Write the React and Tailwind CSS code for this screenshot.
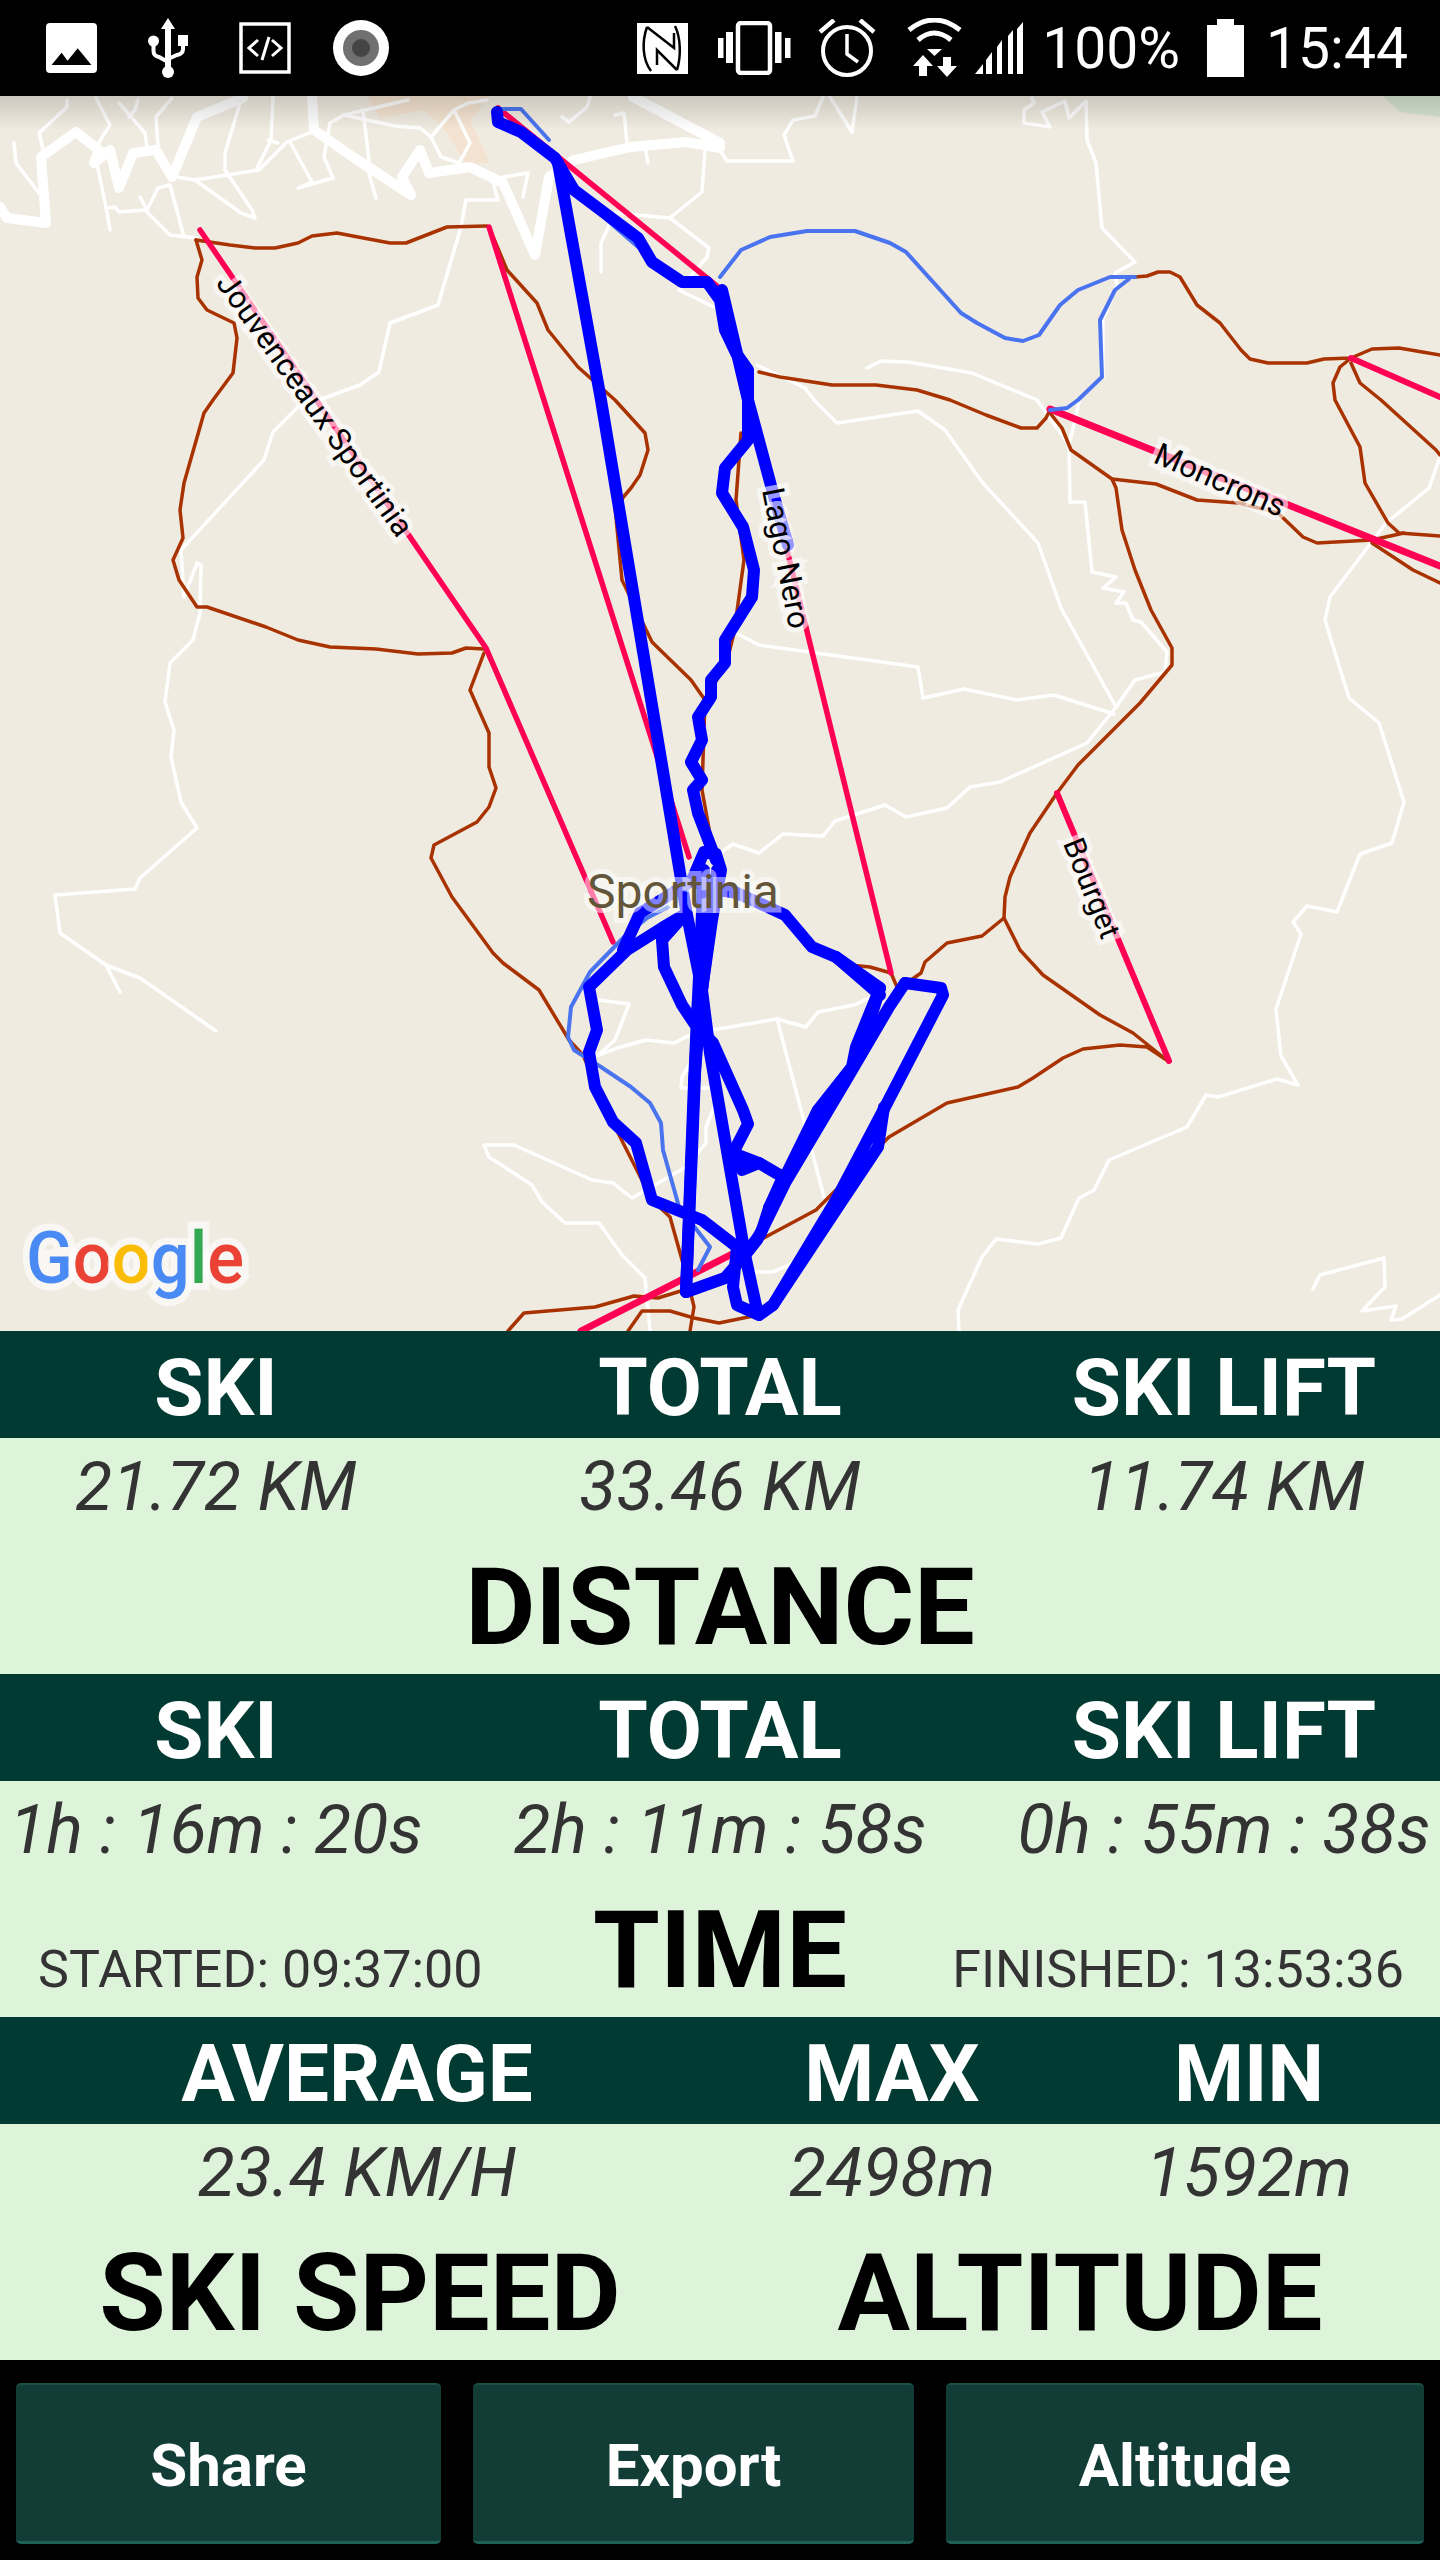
import React from "react";

const thickRoads = [
  "0,207 7,218 46,223 41,157 76,132 99,150 94,163 110,150 119,188 133,153 156,150 172,177 197,117 243,98",
  "312,97 314,130 353,157 411,195 402,177 420,150 429,173 470,167 503,183 535,255 549,177 574,160 631,147 686,142 720,148",
  "633,97 720,143",
];

const roads = [
  "67,100 67,107 39,133 44,153",
  "14,143 16,163 39,193",
  "96,98 110,125 94,150 106,207 110,230",
  "119,103 145,133 147,147",
  "138,100 135,110 129,117",
  "172,98 156,117 158,147",
  "106,208 115,207 119,212 145,210 170,235 197,238",
  "140,197 147,210 158,188 170,185 184,237",
  "177,177 195,180 227,175 259,170 287,142 312,132",
  "195,180 241,213 255,218 252,210 225,170 225,153 241,100",
  "273,97 271,140 257,168",
  "268,140 278,143",
  "290,142 312,182 298,188 333,178 324,157 330,123 344,115 395,103 408,100",
  "344,115 395,126 420,128 431,137 454,110 468,103 487,100",
  "363,110 369,160 367,167 376,198",
  "431,137 441,157 459,163 470,143 454,110",
  "503,177 528,173 523,197",
  "493,182 498,200 466,200 461,227 438,305 390,323 379,372 360,385 319,400 298,407 273,432 264,460 181,550 184,597 197,563 201,565 200,613 193,640 170,663 165,702 174,730 171,757 181,802 197,828 140,878 135,889 55,895 60,933 106,965 140,978 216,1031",
  "106,965 120,992",
  "562,117 569,122 587,107 590,97",
  "615,115 624,113 627,143",
  "645,147 648,163",
  "705,150 702,192 670,218 709,248 707,257 679,290 720,310",
  "601,272 601,243 615,213 670,218",
  "720,150 727,161 793,161 784,135 793,120 815,116 823,97",
  "830,97 852,132 857,97",
  "1032,98 1034,103 1024,110 1024,123 1050,127 1042,112 1065,101 1069,118 1086,101 1087,140 1096,163 1102,228 1135,262 1115,273 1117,285 1103,320 1103,377 1080,398 1069,445 1070,502 1085,502 1092,572 1116,577 1103,588 1124,592 1116,603 1126,603 1133,620 1141,622 1167,652 1165,672 1135,680 1116,707 1087,743 1000,782 970,787 947,808 906,817 885,805 835,821 823,836 783,834 759,853 733,844 720,853",
  "1037,400 1069,445",
  "814,400 837,423 918,411 945,430 982,482 1038,543 1061,608 1116,707",
  "867,368 881,361 908,362 972,373 1037,400",
  "757,365 805,388 814,400",
  "734,632 759,645 918,667 923,698 964,689 1017,700 1054,695 1114,714",
  "1440,457 1429,488 1386,523 1330,597 1325,620 1349,698 1379,723 1404,802 1392,843 1360,854 1337,912 1307,906 1293,922 1301,934 1276,1009 1281,1056 1298,1085 1277,1079 1218,1097 1206,1095 1187,1127 1109,1160 1094,1190 1079,1198 1061,1238 1038,1244 996,1239 982,1257 958,1310 959,1331",
  "1313,1289 1320,1275 1384,1258 1385,1287 1362,1311 1396,1306 1391,1320 1402,1319 1440,1295",
  "599,1000 629,1004 615,1040 597,1056 617,1048 646,1040 674,1043 694,1033 777,1019 806,1027 818,1012 854,1005 876,995",
  "777,1019 824,1197",
  "694,1057 682,1077 681,1088 714,1088",
  "717,1100 706,1127 706,1143 686,1167 632,1198 613,1183 592,1180 514,1145 484,1145 489,1157 532,1185 542,1202 565,1223 599,1223 622,1255 645,1278 650,1331",
  "692,1297 694,1310 690,1331",
  "753,1272 773,1272 793,1263",
];

const pistes = [
  "196,240 230,245 255,248 275,248 298,243 312,236 337,233 358,237 390,243 406,243 447,227 487,226",
  "196,240 202,260 197,277 198,298 207,310 234,323 237,338 233,373 213,400 204,413 184,483 180,510 183,538 173,560 179,580 197,607 207,607 266,627 298,640 330,647 376,649 418,654 452,653 466,648 484,649",
  "484,653 470,690 489,733 489,767 496,788 489,807 477,822 434,845 431,858 452,897 493,953 503,963 539,990 569,1040 583,1055 610,1117 652,1200 670,1217 684,1267 684,1290",
  "489,227 507,270 537,303 548,330 578,367 615,400 645,433 648,450 640,475 631,488 615,507 622,580 652,642 691,680 705,700 702,790 712,845",
  "741,433 736,500 744,560 734,633 729,653 712,690",
  "759,372 780,377 832,385 876,385 917,390 950,400 986,415 1021,428 1037,428 1046,418 1050,410",
  "1135,277 1147,276 1158,272 1170,272 1180,277 1197,305 1220,323 1241,350 1250,359 1268,363 1307,363 1324,359 1351,358 1372,349 1399,348 1440,355",
  "1351,358 1340,367 1333,383 1335,400 1360,447 1365,483 1388,523 1399,533 1440,536",
  "1351,363 1360,383 1381,400 1436,450 1440,455",
  "1050,413 1062,428 1071,450 1112,479 1156,484 1197,500 1239,503 1278,513 1303,537 1317,543 1372,540 1404,533",
  "1372,543 1413,570 1440,583",
  "1112,479 1116,488 1122,530 1135,570 1151,610 1172,648 1172,665 1140,703 1078,765 1057,793 1030,833 1010,877 1005,897 1004,918 982,936 947,943 925,962 921,973 911,980",
  "1004,918 1020,950 1043,975 1100,1015 1133,1033 1168,1061 1147,1047 1120,1045 1083,1049 1063,1058 1033,1078 1018,1087 947,1103 889,1137 856,1170 816,1210 773,1233 706,1269",
  "850,965 870,967 891,973 897,987",
  "508,1331 524,1313 595,1307 634,1296 658,1298 684,1290",
  "628,1331 642,1311 670,1311 694,1318 719,1323 753,1316",
  "690,1331 694,1307 690,1290",
];

const lifts = [
  ["200,230 486,648 613,942", 5.5],
  ["489,227 689,857", 5.5],
  ["498,108 718,287 773,493 891,973", 5.5],
  ["1050,409 1440,566", 7],
  ["1057,793 1169,1061", 6],
  ["1351,358 1440,397", 6],
  ["581,1331 740,1250", 7],
];

const thinTracks = [
  "720,277 741,250 770,237 807,231 855,231 890,243 906,252 961,313 977,323 1005,338 1023,341 1039,335 1060,305 1078,290 1110,277 1135,277",
  "1129,279 1115,290 1100,320 1102,377 1078,400 1067,408 1050,410",
  "500,109 521,109 549,140",
  "592,207 638,247",
  "668,907 647,918 624,937 590,972 571,1007 568,1037 574,1050 601,1067 631,1087 650,1103 661,1123 663,1150 679,1207 710,1247 698,1270",
];

const tracks = [
  "497,112 498,122 521,132 555,158 574,190 638,238 652,262 682,282 707,282 720,300 725,330 736,353 748,370 748,440 725,468 722,493 743,527 754,570 752,597 725,640 725,663 711,680 711,697 698,717 702,740 691,762 702,780 693,790 698,813 716,860",
  "722,290 748,400 773,493 788,545",
  "558,163 601,400 679,867 686,910 702,990 710,1053 745,1255 757,1310",
  "704,870 694,1083 686,1292",
  "717,870 702,990 694,1083",
  "698,1000 692,1150 686,1292",
  "692,880 704,852 716,854 721,870 712,920 702,990",
  "684,915 662,928 627,950 589,987 597,1030 589,1052 595,1087 613,1122 636,1143 652,1200 702,1220 737,1247 745,1255",
  "640,913 623,950",
  "640,913 666,897 688,883",
  "662,940 664,967 682,1005 694,1023 713,1043 743,1110 748,1124 733,1153 742,1170 759,1163 783,1177 769,1208 761,1233 745,1255 725,1278 686,1292",
  "662,940 686,913",
  "733,1153 759,1163",
  "702,887 737,893 785,915 812,947 836,957 880,988 864,1040",
  "880,988 856,1047 852,1067 818,1110 785,1177 769,1208",
  "905,983 941,988 943,995 885,1107 836,1200 773,1305 759,1315 737,1305 733,1287 737,1247",
  "905,983 889,1007 848,1077 785,1183 757,1240 745,1255",
  "884,1107 878,1147 836,1210 773,1305",
  "836,957 880,995",
  "818,1110 800,1150 769,1208",
];

const liftLabels = [
  ["Jouvenceaux Sportinia", 315, 405, 54.5, 31],
  ["Lago Nero", 786, 558, 79, 31],
  ["Moncrons", 1220, 480, 23.5, 31],
  ["Bourget", 1092, 888, 68, 30],
];

const Lines = ({ list, color, width }) =>
  list.map((points, i) => (
    <polyline key={i} points={points} fill="none" stroke={color} strokeWidth={width} strokeLinejoin="round" strokeLinecap="round" />
  ));

const SkiMap = () => (
  <svg className="block w-full h-[1235px]" viewBox="0 96 1440 1235">
    <defs>
      <linearGradient id="shade" x1="0" y1="0" x2="0" y2="1">
        <stop offset="0" stopColor="#000" stopOpacity="0.15" />
        <stop offset="1" stopColor="#000" stopOpacity="0" />
      </linearGradient>
    </defs>
    <rect x="0" y="96" width="1440" height="1235" fill="#f0ebe0" />
    <polygon points="1383,96 1440,96 1440,117 1400,112" fill="#d7e4d2" />
    <polygon points="367,96 490,96 470,120 490,163 465,163 445,130 425,110 380,118" fill="#f4e3d0" />
    <Lines list={roads} color="#ffffff" width={3.5} />
    <Lines list={thickRoads} color="#ffffff" width={10} />
    <Lines list={pistes} color="#a93300" width={3.5} />
    {lifts.map(([points, width], i) => (
      <polyline key={i} points={points} fill="none" stroke="#ff0055" strokeWidth={width} strokeLinecap="round" strokeLinejoin="round" />
    ))}
    <Lines list={thinTracks} color="#4a73f0" width={4} />
    <Lines list={tracks} color="#0000ff" width={12} />
    {liftLabels.map(([label, x, y, angle, size]) => (
      <text
        key={label}
        transform={`translate(${x} ${y}) rotate(${angle})`}
        textAnchor="middle"
        dominantBaseline="central"
        fontFamily="Roboto, sans-serif"
        fontSize={size}
        fill="#000"
        stroke="#fff"
        strokeOpacity="0.6"
        strokeWidth="10"
        paintOrder="stroke"
      >
        {label}
      </text>
    ))}
    <text x="587" y="908" fontFamily="Roboto, sans-serif" fontSize="48" fill="#62553a" stroke="#fff" strokeOpacity="0.5" strokeWidth="10" paintOrder="stroke">
      Sportinia
    </text>
    <text x="26" y="1283" fontFamily="Roboto, sans-serif" fontWeight="500" fontSize="72" textLength="218" lengthAdjust="spacingAndGlyphs" stroke="#fff" strokeOpacity="0.6" strokeWidth="14" paintOrder="stroke">
      <tspan fill="#4a8af4">G</tspan>
      <tspan fill="#ea4335">o</tspan>
      <tspan fill="#fbbc05">o</tspan>
      <tspan fill="#4a8af4">g</tspan>
      <tspan fill="#34a853">l</tspan>
      <tspan fill="#ea4335">e</tspan>
    </text>
    <rect x="0" y="96" width="1440" height="34" fill="url(#shade)" />
  </svg>
);

const StatusBar = () => (
  <div className="h-[96px] bg-black flex justify-between items-center text-white text-[57px] leading-none">
    <div className="flex items-center pl-[46px]">
      <svg className="w-[51px] h-[51px]" viewBox="0 0 51 51">
        <rect width="51" height="50" rx="4" fill="#fff" />
        <polygon points="5.5,42 15.6,29.7 21.6,37.7 31.7,25.3 45.4,42" fill="#000" />
      </svg>
      <svg className="w-[40px] h-[60px] ml-[51px]" viewBox="0 0 40 60" fill="#fff">
        <polygon points="20,0 27,11 23,11 23,50 17,50 17,11 13,11" />
        <circle cx="20" cy="54" r="6" />
        <circle cx="5.5" cy="23" r="5.5" />
        <rect x="30" y="17" width="10" height="11" />
        <path d="M5.5 25 V33 Q5.5 38 11 39 L20 44 M35 25 V31 Q35 36 29 37 L20 41" fill="none" stroke="#fff" strokeWidth="4" />
      </svg>
      <svg className="w-[52px] h-[52px] ml-[51px]" viewBox="0 0 52 52" fill="none" stroke="#fff">
        <rect x="2" y="2" width="48" height="48" strokeWidth="3.5" />
        <path d="M19 18 L10 26 L19 34 M33 18 L42 26 L33 34 M30 15 L23 38" strokeWidth="3" />
      </svg>
      <svg className="w-[56px] h-[56px] ml-[42px]" viewBox="0 0 56 56">
        <circle cx="28" cy="28" r="28" fill="#fff" />
        <circle cx="28" cy="28" r="18" fill="#707070" />
        <circle cx="28" cy="28" r="9" fill="#444" />
      </svg>
    </div>
    <div className="flex items-center pr-[32px]">
      <svg className="w-[51px] h-[51px]" viewBox="0 0 51 51" fill="none">
        <rect width="51" height="51" fill="#fff" />
        <path d="M10 4 C5 18 5 36 14 48 M38 3 C44 15 44 34 40 47 M10 4 L37 25 V10 M40 47 L20 27 V42" stroke="#000" strokeWidth="2.5" />
      </svg>
      <svg className="w-[73px] h-[54px] ml-[30px]" viewBox="0 0 73 54" fill="#fff">
        <rect x="0" y="17" width="5.5" height="20" />
        <rect x="8" y="11" width="7" height="31" />
        <rect x="20" y="2" width="32" height="50" rx="3" fill="none" stroke="#fff" strokeWidth="4.5" />
        <rect x="57" y="11" width="6.5" height="31" />
        <rect x="67" y="17" width="5.5" height="20" />
      </svg>
      <svg className="w-[60px] h-[58px] ml-[26px]" viewBox="0 0 60 58" fill="none" stroke="#fff">
        <circle cx="30" cy="32" r="24" strokeWidth="4" />
        <path d="M3 13 L17 1 M57 13 L43 1" strokeWidth="4.5" />
        <path d="M30 15 V35 L41 43" strokeWidth="3.5" />
      </svg>
      <svg className="w-[55px] h-[60px] ml-[30px]" viewBox="0 0 55 60" fill="#fff">
        <path d="M2 12 Q27 -8 53 12 M11 22 Q27 8 44 22" fill="none" stroke="#fff" strokeWidth="5" />
        <polygon points="20,31 35,31 27.5,38" />
        <polygon points="16,37 26,48 20,48 20,58 12,58 12,48 6,48" />
        <polygon points="40,59 50,48 44,48 44,39 36,39 36,48 30,48" />
      </svg>
      <svg className="w-[48px] h-[52px] ml-[13px]" viewBox="0 0 48 52" fill="#fff">
        <polygon points="0,52 8,42 8,52" />
        <polygon points="11,38 17,30 17,52 11,52" />
        <polygon points="22,25 27,18 27,52 22,52" />
        <polygon points="33,14 38,8 38,52 33,52" />
        <polygon points="42,7 48,0 48,52 42,52" />
      </svg>
      <span className="ml-[19px]">100%</span>
      <svg className="w-[37px] h-[58px] ml-[27px]" viewBox="0 0 37 58" fill="#fff">
        <polygon points="10,0 27,0 27,6 37,6 37,58 0,58 0,6 10,6" />
      </svg>
      <span className="ml-[22px]">15:44</span>
    </div>
  </div>
);

const headCell = "text-center text-white font-bold text-[80px]";
const valueCell = "text-center italic text-[#333333] text-[68px] whitespace-nowrap";
const bigText = "text-center font-bold text-black text-[108px] leading-[140px]";

const HeadRow = ({ labels, cols }) => (
  <div className={`${cols} h-[107px] pt-[4px] leading-[107px] bg-[#003a32]`}>
    {labels.map((label, i) => (
      <div key={i} className={headCell}>{label}</div>
    ))}
  </div>
);

const ValueRow = ({ values, cols }) => (
  <div className={`${cols} leading-[99px]`}>
    {values.map((value, i) => (
      <div key={i} className={valueCell}>{value}</div>
    ))}
  </div>
);

const threeCols = "grid grid-cols-[432px_576px_432px]";
const altCols = "grid grid-cols-[714px_356px_358px]";

const App = () => (
  <div className="w-[1440px] h-[2560px] bg-black overflow-hidden font-[family-name:Roboto,sans-serif]">
    <StatusBar />
    <SkiMap />

    <HeadRow cols={threeCols} labels={["SKI", "TOTAL", "SKI LIFT"]} />
    <div className="h-[236px] bg-[#def4da]">
      <ValueRow cols={threeCols} values={["21.72 KM", "33.46 KM", "11.74 KM"]} />
      <div className={bigText}>DISTANCE</div>
    </div>

    <HeadRow cols={threeCols} labels={["SKI", "TOTAL", "SKI LIFT"]} />
    <div className="h-[236px] bg-[#def4da]">
      <ValueRow cols={threeCols} values={["1h : 16m : 20s", "2h : 11m : 58s", "0h : 55m : 38s"]} />
      <div className="grid grid-cols-[1fr_auto_1fr] items-baseline">
        <div className="pl-[38px] text-[52px] text-[#333333] whitespace-nowrap">STARTED: 09:37:00</div>
        <div className={bigText}>TIME</div>
        <div className="pr-[36px] text-right text-[52px] text-[#333333] whitespace-nowrap">FINISHED: 13:53:36</div>
      </div>
    </div>

    <HeadRow cols={altCols} labels={["AVERAGE", "MAX", "MIN"]} />
    <div className="h-[236px] bg-[#def4da]">
      <ValueRow cols={altCols} values={["23.4 KM/H", "2498m", "1592m"]} />
      <div className="grid grid-cols-2">
        <div className={bigText}>SKI SPEED</div>
        <div className={bigText}>ALTITUDE</div>
      </div>
    </div>

    <div className="flex gap-[32px] px-[16px] pt-[23px]">
      {[["Share", "w-[425px]"], ["Export", "w-[441px]"], ["Altitude", "w-[478px]"]].map(([label, width]) => (
        <button
          key={label}
          type="button"
          className={`${width} h-[161px] pt-[5px] rounded-[5px] bg-[#123d37] border-t-2 border-b-[3px] border-t-[#1a5048] border-b-[#1f6156] text-white font-bold text-[60px]`}
        >
          {label}
        </button>
      ))}
    </div>
  </div>
);

export default App;
